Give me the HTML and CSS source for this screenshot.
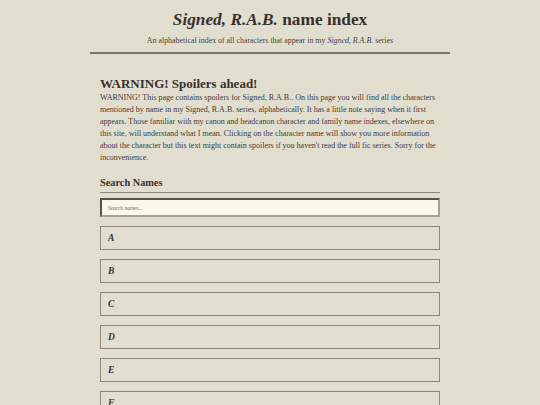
FILE: index.html
```html
<!DOCTYPE html>
<html lang="en">
<head>
<meta charset="utf-8">
<title>Signed, R.A.B. name index</title>
<link rel="stylesheet" href="styles.css">
</head>
<body>
<div class="page">
  <header class="site-header">
    <h1 class="title"><em>Signed, R.A.B.</em> name index</h1>
    <p class="subtitle">An alphabetical index of all characters that appear in my <em>Signed, R.A.B.</em> series</p>
  </header>
  <main class="content">
    <section class="warning">
      <h2 class="warning-title">WARNING! Spoilers ahead!</h2>
      <p class="warning-text">WARNING! This page contains spoilers for Signed, R.A.B.. On this page you will find all the characters mentioned by name in my Signed, R.A.B. series, alphabetically. It has a little note saying when it first appears. Those familiar with my canon and headcanon character and family name indexes, elsewhere on this site, will understand what I mean. Clicking on the character name will show you more information about the character but this text might contain spoilers if you haven't read the full fic series. Sorry for the inconvenience.</p>
    </section>
    <section class="search">
      <h3 class="search-title">Search Names</h3>
      <input class="search-input" type="text" placeholder="Search names...">
    </section>
    <div class="letters">
      <div class="letter-box"><span class="letter">A</span></div>
      <div class="letter-box"><span class="letter">B</span></div>
      <div class="letter-box"><span class="letter">C</span></div>
      <div class="letter-box"><span class="letter">D</span></div>
      <div class="letter-box"><span class="letter">E</span></div>
      <div class="letter-box"><span class="letter">F</span></div>
    </div>
  </main>
</div>
</body>
</html>
```
FILE: styles.css
```css
html, body {
  margin: 0;
  padding: 0;
  background: #e1ded0;
  color: #3b302c;
  font-family: "Liberation Serif", "DejaVu Serif", serif;
}
.page {
  width: 360px;
  margin: 0 auto;
}
.site-header {
  padding-top: 9px;
  padding-bottom: 6px;
  border-bottom: 2px solid #7d776b;
  text-align: center;
}
.title {
  margin: 0;
  font-size: 17.3px;
  line-height: 22px;
  font-weight: bold;
}
.subtitle {
  margin: 5px 0 0;
  font-size: 7.9px;
  line-height: 10px;
  color: #4a3f3a;
}
.content {
  padding: 22px 10px 0;
}
.warning-title {
  margin: 0;
  font-size: 13px;
  line-height: 16px;
  font-weight: bold;
}
.warning-text {
  margin: 0;
  font-size: 8px;
  line-height: 12px;
  color: #463b36;
}
.search {
  margin-top: 12px;
}
.search-title {
  margin: 0;
  padding-bottom: 2px;
  border-bottom: 1px solid #8a8578;
  font-size: 10.3px;
  line-height: 14px;
  font-weight: bold;
}
.search-input {
  display: block;
  box-sizing: border-box;
  width: 100%;
  height: 19px;
  margin-top: 5px;
  padding: 0 6px;
  background: #fbf8ea;
  border-style: solid;
  border-width: 2px;
  border-color: #57514a #a5a194 #a5a194 #57514a;
  font-family: "Liberation Serif", "DejaVu Serif", serif;
  font-style: italic;
  font-size: 5.5px;
  color: #3b302c;
}
.search-input::placeholder {
  color: #6c625c;
}
.letters {
  margin-top: 9px;
  display: flex;
  flex-direction: column;
  gap: 9px;
}
.letter-box {
  box-sizing: border-box;
  height: 24px;
  border: 1px solid #8a8578;
  padding: 0 7px;
  display: flex;
  align-items: center;
}
.letter {
  font-size: 9.5px;
  font-weight: bold;
  font-style: italic;
}
```
